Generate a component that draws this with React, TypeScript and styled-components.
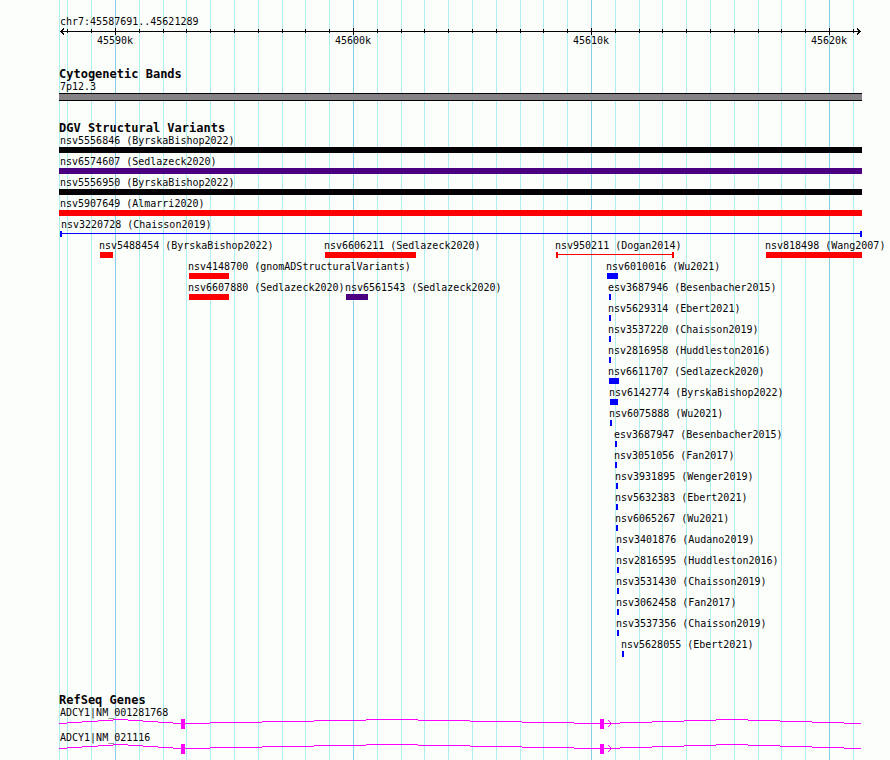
import React from "react";
import styled, { createGlobalStyle } from "styled-components";

// Horizontal positions are steps along the displayed region, which spans 803 steps.
const SPAN = 803;
const pct = (n: number) => `${(n / SPAN) * 100}%`;

const colors = {
  page: "#fcfefc",
  ink: "#040204",
  band: "#848284",
  minor: "#afeeee",
  major: "#87ceeb",
  red: "#ff0000",
  blue: "#0000ff",
  indigo: "#4b0082",
  gene: "#ff00ff",
};

type Shape = "bar" | "span";
interface Variant {
  name: string;
  from: number;
  to: number;
  color: string;
  shape?: Shape;
}

const { ink, red, blue, indigo } = colors;
const v = (name: string, from: number, to: number, color: string, shape: Shape = "bar"): Variant => ({
  name, from, to, color, shape,
});

const lanes: Variant[][] = [
  [v("nsv5556846 (ByrskaBishop2022)", 0, 803, ink)],
  [v("nsv6574607 (Sedlazeck2020)", 0, 803, indigo)],
  [v("nsv5556950 (ByrskaBishop2022)", 0, 803, ink)],
  [v("nsv5907649 (Almarri2020)", 0, 803, red)],
  [v("nsv3220728 (Chaisson2019)", 1, 803, blue, "span")],
  [
    v("nsv5488454 (ByrskaBishop2022)", 41, 54, red),
    v("nsv6606211 (Sedlazeck2020)", 266, 357, red),
    v("nsv950211 (Dogan2014)", 497, 615, red, "span"),
    v("nsv818498 (Wang2007)", 707, 803, red),
  ],
  [
    v("nsv4148700 (gnomADStructuralVariants)", 130, 170, red),
    v("nsv6010016 (Wu2021)", 548, 559, blue),
  ],
  [
    v("nsv6607880 (Sedlazeck2020)", 130, 170, red),
    v("nsv6561543 (Sedlazeck2020)", 287, 309, indigo),
    v("esv3687946 (Besenbacher2015)", 550, 552, blue),
  ],
  [v("nsv5629314 (Ebert2021)", 550, 552, blue)],
  [v("nsv3537220 (Chaisson2019)", 550, 552, blue)],
  [v("nsv2816958 (Huddleston2016)", 550, 552, blue)],
  [v("nsv6611707 (Sedlazeck2020)", 550, 560, blue)],
  [v("nsv6142774 (ByrskaBishop2022)", 551, 559, blue)],
  [v("nsv6075888 (Wu2021)", 551, 553, blue)],
  [v("esv3687947 (Besenbacher2015)", 556, 558, blue)],
  [v("nsv3051056 (Fan2017)", 556, 558, blue)],
  [v("nsv3931895 (Wenger2019)", 557, 559, blue)],
  [v("nsv5632383 (Ebert2021)", 557, 559, blue)],
  [v("nsv6065267 (Wu2021)", 557, 559, blue)],
  [v("nsv3401876 (Audano2019)", 558, 560, blue)],
  [v("nsv2816595 (Huddleston2016)", 558, 560, blue)],
  [v("nsv3531430 (Chaisson2019)", 558, 560, blue)],
  [v("nsv3062458 (Fan2017)", 558, 560, blue)],
  [v("nsv3537356 (Chaisson2019)", 558, 560, blue)],
  [v("nsv5628055 (Ebert2021)", 563, 565, blue)],
];

// One grid line per 1 kb; every tenth is labelled.
const ticks = Array.from({ length: 34 }, (_, i) => {
  const kb = 45588 + i;
  return { kb, at: 56 + (kb - 45590) * 23.8, major: kb % 10 === 0 };
}).filter((t) => t.at < SPAN);

// Intron segments: start, end, height below the peak of the arc.
const introns: [number, number, number][] = [
  [0, 8, 4], [8, 23, 3], [23, 39, 2], [39, 54, 1], [54, 69, 0],
  [69, 84, 1], [84, 99, 2], [99, 114, 3], [114, 122, 4],
  [126, 151, 4], [151, 203, 3], [203, 255, 2], [255, 307, 1], [307, 359, 0],
  [359, 411, 1], [411, 463, 2], [463, 515, 3], [515, 541, 4],
  [545, 561, 4], [561, 593, 3], [593, 625, 2], [625, 657, 1], [657, 689, 0],
  [689, 721, 1], [721, 753, 2], [753, 785, 3], [785, 802, 4],
];
const exons = [122, 541];
const arrow: [number, number][] = [[549, 1], [550, 2], [551, 3], [551, 5], [550, 6], [549, 7]];

const GlobalStyle = createGlobalStyle`
  body {
    margin: 0;
    background: ${colors.page};
    color: ${colors.ink};
    font: 10px/12px "DejaVu Sans Mono", monospace;
    overflow-x: hidden;
  }
`;

const Page = styled.main`
  box-sizing: border-box;
  min-height: 100vh;
  padding: 0 28px 0 59px;
  display: grid;
`;

const Panel = styled.div`
  position: relative;
  z-index: 0;
  padding-top: 16px;
`;

const Grid = styled.div`
  position: absolute;
  inset: 0;
  z-index: -1;
`;

const GridLine = styled.div<{ $at: number; $major?: boolean }>`
  position: absolute;
  top: 0;
  bottom: 0;
  left: ${(p) => pct(p.$at)};
  width: 1px;
  background: ${(p) => (p.$major ? colors.major : colors.minor)};
`;

const RegionTitle = styled.h1`
  margin: 0;
  padding-left: 1px;
  font: inherit;
`;

const Axis = styled.div`
  position: relative;
  display: flex;
  align-items: center;
  justify-content: space-between;
  height: 7px;
  padding: 0 1px;
`;

const AxisLine = styled.div`
  flex: 1;
  height: 1px;
  margin: 0 -5px;
  background: ${colors.ink};
`;

const ArrowHead = styled.svg`
  width: 5px;
  height: 7px;
  fill: none;
  stroke: ${colors.ink};
  shape-rendering: crispEdges;
`;

const Tick = styled.div<{ $at: number; $major: boolean }>`
  position: absolute;
  top: ${(p) => (p.$major ? "0" : "1px")};
  left: ${(p) => pct(p.$at)};
  width: 1px;
  height: ${(p) => (p.$major ? "7px" : "4px")};
  background: ${colors.ink};
`;

const TickLabels = styled.div`
  position: relative;
  height: 12px;
`;

const TickLabel = styled.span<{ $at: number }>`
  position: absolute;
  left: ${(p) => pct(p.$at)};
  transform: translateX(-50%);
`;

const Track = styled.section<{ $gap: number }>`
  margin-top: ${(p) => p.$gap}px;
`;

const TrackTitle = styled.h2`
  margin: 0;
  font-size: 12px;
  line-height: 14px;
`;

const Label = styled.div<{ $inset?: boolean }>`
  margin-left: ${(p) => (p.$inset ? "1px" : "-1px")};
  white-space: nowrap;
`;

const Band = styled.div`
  height: 6px;
  border: solid ${colors.ink};
  border-width: 1px 0;
  background: ${colors.band};
`;

const Lane = styled.div`
  position: relative;
  height: 21px;
`;

const Feature = styled.div<{ $from: number; $to: number }>`
  position: absolute;
  left: ${(p) => pct(p.$from)};
  width: ${(p) => pct(p.$to - p.$from)};
`;

const Bar = styled.div<{ $color: string }>`
  height: 6px;
  background: ${(p) => p.$color};
`;

const Span = styled.div<{ $color: string }>`
  box-sizing: border-box;
  height: 6px;
  padding-top: 2px;
  border: solid ${(p) => p.$color};
  border-width: 0 2px;
  &::before {
    content: "";
    display: block;
    height: 1px;
    background: ${(p) => p.$color};
  }
`;

const GeneLane = styled.div`
  height: 25px;
`;

const GeneShape = styled.svg`
  display: block;
  width: 100%;
  height: 10px;
  fill: ${colors.gene};
  shape-rendering: crispEdges;
`;

function Gene({ name }: { name: string }) {
  return (
    <GeneLane>
      <Label $inset>{name}</Label>
      <GeneShape viewBox={`0 0 ${SPAN} 10`} preserveAspectRatio="none" aria-hidden="true">
        {introns.map(([a, b, y]) => (
          <rect key={a} x={a} y={y} width={b - a} height={1} />
        ))}
        {exons.map((x) => (
          <rect key={x} x={x} y={0} width={4} height={10} />
        ))}
        {arrow.map(([x, y]) => (
          <rect key={`${x}-${y}`} x={x} y={y} width={1} height={1} />
        ))}
      </GeneShape>
    </GeneLane>
  );
}

export default function App() {
  return (
    <>
      <GlobalStyle />
      <Page>
        <Panel>
          <Grid>
            <GridLine $at={0} />
            {ticks.map((t) => (
              <GridLine key={t.kb} $at={t.at} $major={t.major} />
            ))}
          </Grid>
          <header>
            <RegionTitle>chr7:45587691..45621289</RegionTitle>
            <Axis>
              <ArrowHead viewBox="0 0 5 7" aria-hidden="true">
                <path d="M4 0.5L1 3.5L4 6.5" />
              </ArrowHead>
              <AxisLine />
              <ArrowHead viewBox="0 0 5 7" aria-hidden="true">
                <path d="M1 0.5L4 3.5L1 6.5" />
              </ArrowHead>
              {ticks.map((t) => (
                <Tick key={t.kb} $at={t.at} $major={t.major} />
              ))}
            </Axis>
            <TickLabels>
              {ticks.filter((t) => t.major).map((t) => (
                <TickLabel key={t.kb} $at={t.at}>{t.kb}k</TickLabel>
              ))}
            </TickLabels>
          </header>
          <Track $gap={20}>
            <TrackTitle>Cytogenetic Bands</TrackTitle>
            <Label $inset>7p12.3</Label>
            <Band />
          </Track>
          <Track $gap={20}>
            <TrackTitle>DGV Structural Variants</TrackTitle>
            {lanes.map((lane) => (
              <Lane key={lane[0].name}>
                {lane.map((f) => (
                  <Feature key={f.name} $from={f.from} $to={f.to}>
                    <Label $inset={f.from <= 1}>{f.name}</Label>
                    {f.shape === "span" ? <Span $color={f.color} /> : <Bar $color={f.color} />}
                  </Feature>
                ))}
              </Lane>
            ))}
          </Track>
          <Track $gap={33}>
            <TrackTitle>RefSeq Genes</TrackTitle>
            <Gene name="ADCY1|NM_001281768" />
            <Gene name="ADCY1|NM_021116" />
          </Track>
        </Panel>
      </Page>
    </>
  );
}
